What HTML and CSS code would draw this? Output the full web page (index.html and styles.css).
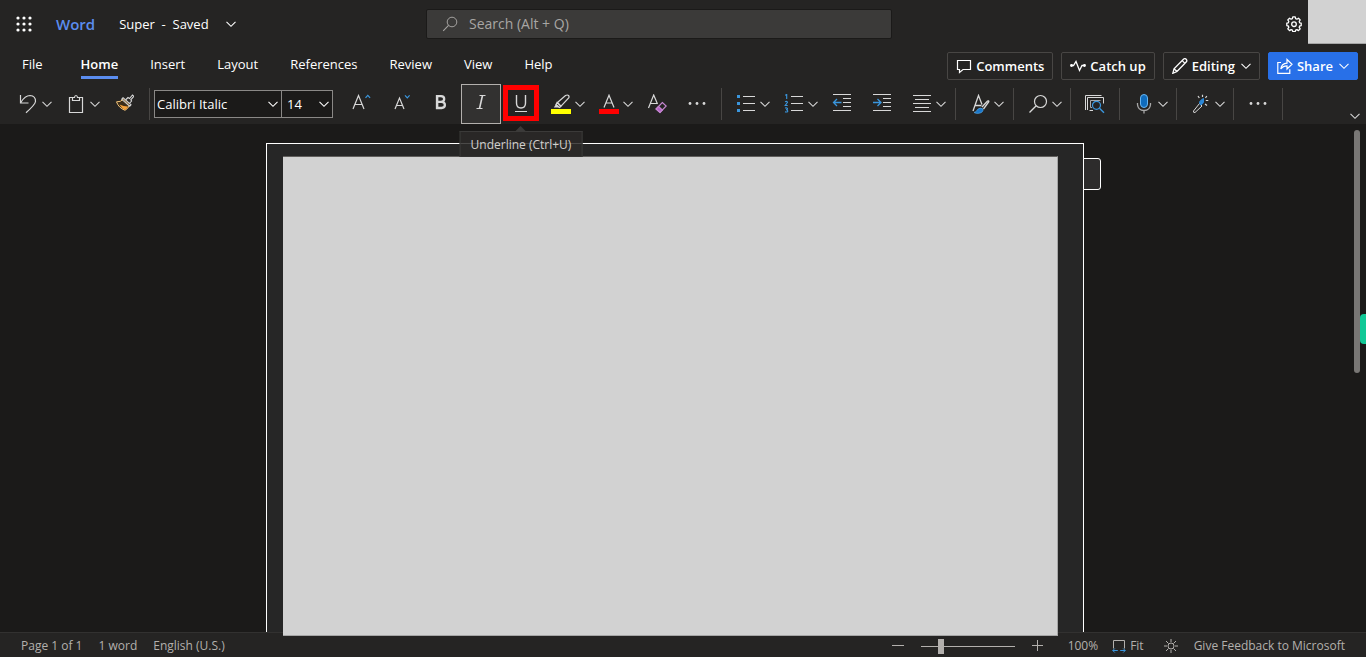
FILE: index.html
```html
<!DOCTYPE html>
<html lang="en">
<head>
<meta charset="utf-8">
<title>Super - Word</title>
<link rel="stylesheet" href="styles.css">
</head>
<body>
<svg class="defs" aria-hidden="true">
  <symbol id="chev" viewBox="0 0 10 10"><path d="M.5 2.800 5 7.300l4.500-4.500" fill="none" stroke="currentColor" stroke-width="1.100"/></symbol>
  <symbol id="lens" viewBox="0 0 20 20"><circle cx="12.500" cy="7.500" r="6" fill="none" stroke="currentColor" stroke-width="1.200"/><path d="M8.200 11.800 1.500 18.500" stroke="currentColor" stroke-width="1.300"/></symbol>
  <symbol id="dots" viewBox="0 0 20 20"><g fill="currentColor"><circle cx="3" cy="9.500" r="1.400"/><circle cx="10" cy="9.500" r="1.400"/><circle cx="17" cy="9.500" r="1.400"/></g></symbol>
</svg>

<header class="titlebar">
  <div class="title-left">
    <button class="plain launcher" aria-label="App launcher"><svg width="16" height="16" viewBox="0 0 16 16" fill="currentColor"><circle cx="2" cy="2" r="1.600"/><circle cx="8" cy="2" r="1.600"/><circle cx="14" cy="2" r="1.600"/><circle cx="2" cy="8" r="1.600"/><circle cx="8" cy="8" r="1.600"/><circle cx="14" cy="8" r="1.600"/><circle cx="2" cy="14" r="1.600"/><circle cx="8" cy="14" r="1.600"/><circle cx="14" cy="14" r="1.600"/></svg></button>
    <a class="brand" href="#">Word</a>
    <button class="plain docname"><span>Super&nbsp; -&nbsp; Saved</span><svg width="10" height="10"><use href="#chev"/></svg></button>
  </div>
  <label class="search"><svg width="16" height="16"><use href="#lens"/></svg><input type="text" placeholder="Search (Alt + Q)" aria-label="Search"></label>
  <div class="title-right">
    <button class="plain gear" aria-label="Settings"><svg width="16" height="16" viewBox="0 0 16 16" fill="none" stroke="currentColor" stroke-width="1.300" stroke-linejoin="round"><path d="M6.800.8h2.400l.4 1.900 1.300.5 1.600-1 1.700 1.700-1 1.600.5 1.300 1.500.4v2.400l-1.500.4-.5 1.300 1 1.600-1.700 1.700-1.600-1-1.300.5-.4 1.500H6.800l-.4-1.500-1.300-.5-1.600 1-1.700-1.700 1-1.600-.5-1.300-1.500-.4V7.200l1.500-.4.5-1.300-1-1.600 1.700-1.700 1.600 1 1.300-.5z"/><circle cx="8" cy="8.200" r="2.300"/></svg></button>
    <div class="account"></div>
  </div>
</header>

<nav class="tabs">
  <div class="tablist">
    <button class="tab">File</button>
    <button class="tab active">Home</button>
    <button class="tab">Insert</button>
    <button class="tab">Layout</button>
    <button class="tab">References</button>
    <button class="tab">Review</button>
    <button class="tab">View</button>
    <button class="tab">Help</button>
  </div>
  <div class="actions">
    <button class="action"><svg width="16" height="16" viewBox="0 0 16 16" fill="none" stroke="currentColor" stroke-width="1.200"><path d="M1.500 2.500h13v9H7l-3.500 3v-3h-2z"/></svg>Comments</button>
    <button class="action"><svg width="16" height="16" viewBox="0 0 16 16" fill="none" stroke="currentColor" stroke-width="1.300"><path d="M1 7.500h2.500l2.500-4 3.500 9 2.500-5h3"/><circle cx="1.500" cy="7.500" r=".8"/><circle cx="14.500" cy="7.500" r=".8"/></svg>Catch up</button>
    <button class="action"><svg width="16" height="16" viewBox="0 0 16 16" fill="none" stroke="currentColor" stroke-width="1.300"><path d="m.8 15.300 1.200-4.500L11.700 1.100q1.300-1 2.500.2t.2 2.500L5 13.500zM10.200 2.600l3 3M2 10.800 5 13.500"/></svg>Editing<svg width="10" height="10"><use href="#chev"/></svg></button>
    <button class="action share"><svg width="16" height="16" viewBox="0 0 16 16" fill="none" stroke="currentColor" stroke-width="1.200"><path d="M4 4.500H.8v10.800h12v-4M3.800 11Q4.500 5.500 10 5.200V1.500l5 4.800-5 4.700V7.800Q6 7.800 3.800 11z"/></svg>Share<svg width="10" height="10"><use href="#chev"/></svg></button>
  </div>
</nav>

<div class="toolbar" role="toolbar" aria-label="Home">
  <div class="group pad-end">
    <button class="tool split" aria-label="Undo"><svg class="icon" viewBox="0 0 20 20" fill="none" stroke="currentColor" stroke-width="1.200"><path d="M2.500 1v8h8M2.800 8.500Q7 1.500 12 1.500q5.800.5 5.500 6-.3 3-9.500 11.300"/></svg><svg class="chev"><use href="#chev"/></svg></button>
    <button class="tool split" aria-label="Paste"><svg class="icon" viewBox="0 0 20 20" fill="none" stroke="currentColor" stroke-width="1.200"><path d="M7 3.500H3.500v15h13v-15H13M6.500 6.500v-3h2q.2-2 1.500-2t1.500 2h2v3z"/></svg><svg class="chev"><use href="#chev"/></svg></button>
    <button class="tool" aria-label="Format painter"><svg class="icon" viewBox="0 0 20 20" fill="none"><path d="M9.500 5.200Q6.500 8.200 2.500 7.800q2 6 8.500 8.500 3.200-1.500 4.500-5.300z" fill="#3c2d18" stroke="#f3c47a"/><path d="M5.500 10.500q4 2 8.500 2-.8 2-3 3.500-3.500-1.500-5.500-5.500z" fill="#f4a13a"/><path d="m9 3.700 8 7-1.300 1.600-8-7zM12 5.500l2-2 1.500 1 3-3.500 1.300 1.300-3 3.500.8 1.200-1.800 2" stroke="#d8d8d8" stroke-width="1.100"/></svg></button>
  </div>
  <div class="group">
    <div class="combo font-name"><select aria-label="Font"><option>Calibri Italic</option></select><svg class="chev"><use href="#chev"/></svg></div>
    <div class="combo font-size"><select aria-label="Font size"><option>14</option></select><svg class="chev"><use href="#chev"/></svg></div>
  </div>
  <div class="group font-group">
    <button class="tool" aria-label="Grow font"><svg class="icon" viewBox="0 0 20 20" fill="none" stroke="currentColor" stroke-width="1.200"><path d="M2 15 7.500 1.500 13 15M4 10.500h7"/><path d="m14.500 3.800 2.300-2.500 2.300 2.500" stroke="#3a96dd"/></svg></button>
    <button class="tool" aria-label="Shrink font"><svg class="icon" viewBox="0 0 20 20" fill="none" stroke="currentColor" stroke-width="1.200"><path d="M4 15 8.500 4 13 15M5.800 11.500h5.500"/><path d="m14 1.300 2.300 2.500 2.300-2.500" stroke="#3a96dd"/></svg></button>
    <button class="tool" aria-label="Bold"><svg class="icon" viewBox="0 0 20 20" fill="none" stroke="currentColor" stroke-width="2.300"><path d="M6 2.200h4q3.200.2 3.200 2.800T10 7.900H6zM6 7.900h4.500q3.400.3 3.400 3T10.500 14H6zM6.200 1.100v14"/></svg></button>
    <button class="tool pressed" aria-label="Italic" aria-pressed="true"><svg class="icon" viewBox="0 0 20 20" fill="none" stroke="currentColor"><path d="M8.500 1.500h6M5.500 14.500h6"/><path d="m11.500 1.500-3 13" stroke-width="1.600"/></svg></button>
    <button class="tool underline" aria-label="Underline" aria-describedby="tip"><svg class="icon" viewBox="0 0 20 20" fill="none" stroke="currentColor" stroke-width="1.400"><path d="M5.500 1v8q0 5 4.500 5t4.500-5V1"/><path d="M4 17.500h12" stroke-width="1"/></svg><span class="tooltip" id="tip" role="tooltip">Underline (Ctrl+U)</span></button>
    <button class="tool split" aria-label="Highlight"><svg class="icon" viewBox="0 0 20 20" fill="none" stroke="currentColor" stroke-width="1.200"><path d="M0 15h20v5H0z" fill="#ff0" stroke="none"/><path d="m6.500 8.500 8-7q2-1 3 0t.2 2.500L10 12.200zM6 8.500l4 4-1.500 1-3.500-3z"/><path d="m5 10 3.500 3.500H2.800z" fill="currentColor" stroke="none"/></svg><svg class="chev"><use href="#chev"/></svg></button>
    <button class="tool split" aria-label="Font color"><svg class="icon" viewBox="0 0 20 20" fill="none" stroke="currentColor" stroke-width="1.200"><path d="M0 15h20v5H0z" fill="#f00" stroke="none"/><path d="M5 13.500 10 1.200l5 12.300M7 9h6"/></svg><svg class="chev"><use href="#chev"/></svg></button>
    <button class="tool" aria-label="Clear formatting"><svg class="icon" viewBox="0 0 20 20" fill="none" stroke="currentColor" stroke-width="1.200"><path d="M1.500 14 6.700 1l3.800 9M3.300 9.500h7"/><path d="m15.300 8.500 3.900 3.500-6.200 6.500-3.900-3.500z" stroke="#c586d0"/><path d="m11.500 12.500 3.900 3.500-2.400 2.500-3.900-3.500z" fill="#b35fc4" stroke="#c586d0"/></svg></button>
    <button class="tool" aria-label="More font options"><svg class="icon"><use href="#dots"/></svg></button>
  </div>
  <div class="group pad-end">
    <button class="tool split" aria-label="Bullets"><svg class="icon" viewBox="0 0 20 20"><path d="M1 1h3v3H1zM1 8h3v3H1zM1 15h3v3H1z" fill="#3a96dd"/><path d="M7 2.500h12M7 9.500h12M7 16.500h12" stroke="currentColor"/></svg><svg class="chev"><use href="#chev"/></svg></button>
    <button class="tool split" aria-label="Numbering"><svg class="icon" viewBox="0 0 20 20" fill="none"><path d="M1.200 1.200 2.700.5V5M1 7.800q2.500-1 2.500.5L1.200 11.500h2.500M1 14q2.500-.5 2.500.7 0 1-1.500 1 1.800 0 1.800 1.300 0 1.500-2.800.9" stroke="#3a96dd" stroke-width="1.100"/><path d="M7 2.500h12M7 9.500h12M7 16.500h12" stroke="currentColor"/></svg><svg class="chev"><use href="#chev"/></svg></button>
    <button class="tool" aria-label="Decrease indent"><svg class="icon" viewBox="0 0 20 20" fill="none" stroke="currentColor"><path d="M1 .5h18M11 4.500h8M11 8.500h8M11 12.500h8M1 16.500h18"/><path d="M9.500 8.500H1.500M5 5 1.500 8.500 5 12" stroke="#3a96dd" stroke-width="1.300"/></svg></button>
    <button class="tool" aria-label="Increase indent"><svg class="icon" viewBox="0 0 20 20" fill="none" stroke="currentColor"><path d="M1 .5h18M11 4.500h8M11 8.500h8M11 12.500h8M1 16.500h18"/><path d="M1 8.500h8M5.500 5 9 8.500 5.500 12" stroke="#3a96dd" stroke-width="1.300"/></svg></button>
    <button class="tool split" aria-label="Alignment"><svg class="icon" viewBox="0 0 20 20" stroke="currentColor"><path d="M1 1.500h18M3 5.500h14M1 9.500h18M3 13.500h14M1 17.500h18"/></svg><svg class="chev"><use href="#chev"/></svg></button>
  </div>
  <div class="group pad-end">
    <button class="tool split" aria-label="Styles"><svg class="icon" viewBox="0 0 20 20" fill="none" stroke="currentColor" stroke-width="1.300"><path d="M3 17 8.500 1.500 12 10.500M4.500 11.500h7M12 13l5.500-6q1.500-.6 1.300.7L13.500 15"/><path d="M4 18.500q2.500-.5 3.500-3 2.500-2.500 5.500-.5.500 3.500-4 4.300-3 .4-5-.8z" fill="#1a78cc" stroke="#5fb2f0" stroke-width=".6"/></svg><svg class="chev"><use href="#chev"/></svg></button>
  </div>
  <div class="group">
    <button class="tool split" aria-label="Find"><svg class="icon"><use href="#lens"/></svg><svg class="chev"><use href="#chev"/></svg></button>
  </div>
  <div class="group">
    <button class="tool" aria-label="Reuse files"><svg class="icon" viewBox="0 0 20 20" fill="none" stroke="currentColor"><path d="M.5 16V1.500h16M2.500 16V3.500h16v6M8 16.500H4.500"/><path d="M7 13.500H5.500v-7h10" stroke="#a8a8a8"/><circle cx="11.500" cy="11.300" r="4" fill="#252423" stroke="#3a96dd" stroke-width="1.200"/><path d="m14.500 14.200 4.500 4.500" stroke="#3a96dd" stroke-width="1.400"/></svg></button>
  </div>
  <div class="group">
    <button class="tool split" aria-label="Dictate"><svg class="icon" viewBox="0 0 20 20" fill="none"><rect x="6.500" y=".5" width="7" height="13" rx="3.500" fill="#0f6cbd" stroke="#69b5ef"/><path d="M3.500 9v1.500q.5 6 6.500 6t6.500-6V9M10 16.500v3" stroke="#a8a8a8" stroke-width="1.300"/></svg><svg class="chev"><use href="#chev"/></svg></button>
  </div>
  <div class="group">
    <button class="tool split" aria-label="Designer"><svg class="icon" viewBox="0 0 20 20" fill="none" stroke="currentColor"><path d="m8.500 9.500 2.500 2.500-7 6.500q-2 .3-1.500-1.500z"/><path d="M8.500 8q2-3 4-3.500v3.500q-.5 2-3 3z" fill="#2b88d8" stroke="#2b88d8"/><path d="M11.500.8V3M7 2l1.300 2M15.800 2l-1.300 2M14.800 6.500h2.500M14 10l2 1.500" stroke-width="1.200"/></svg><svg class="chev"><use href="#chev"/></svg></button>
  </div>
  <div class="group">
    <button class="tool" aria-label="More"><svg class="icon"><use href="#dots"/></svg></button>
  </div>
  <button class="plain collapse" aria-label="Collapse ribbon"><svg width="10" height="10"><use href="#chev"/></svg></button>
</div>

<main class="canvas">
  <div class="page">
    <div class="sheet"></div>
    <div class="page-flag"></div>
  </div>
  <div class="scroll-thumb"></div>
  <div class="side-widget"></div>
</main>

<footer class="status">
  <div class="status-left"><span>Page 1 of 1</span><span>1 word</span><span>English (U.S.)</span></div>
  <div class="status-right">
    <button class="plain" aria-label="Zoom out"><svg width="12" height="12" stroke="currentColor"><path d="M0 5.500h12"/></svg></button>
    <input class="zoom" type="range" min="0" max="100" value="20" aria-label="Zoom">
    <button class="plain plus" aria-label="Zoom in"><svg width="12" height="12" stroke="currentColor"><path d="M0 5.500h11M5.500 0v11"/></svg></button>
    <span class="percent">100%</span>
    <button class="plain fit"><svg width="14" height="14" viewBox="0 0 14 14" fill="none"><path d="M1.500 9.500v-8h11v8" stroke="currentColor"/><path d="M.8 11.500h5M8.200 11.500h5M2.800 9.500l-2 2 2 2M11.200 9.500l2 2-2 2" stroke="#3a96dd"/></svg>Fit</button>
    <button class="plain sun" aria-label="Switch background"><svg width="14" height="14" viewBox="0 0 14 14" fill="none" stroke="currentColor"><circle cx="7" cy="7" r="3"/><path d="M7 0v3M7 11v3M0 7h3M11 7h3M2 2l2.500 2.500M9.500 9.500 12 12M12 2 9.500 4.500M4.500 9.500 2 12"/></svg></button>
    <a href="#">Give Feedback to Microsoft</a>
  </div>
</footer>
</body>
</html>
```
FILE: styles.css
```css
*, *::before, *::after { box-sizing: border-box; }
body {
  margin: 0;
  height: 100vh;
  display: flex;
  flex-direction: column;
  overflow: hidden;
  background: #1b1a19;
  color: #fff;
  font: 13px/20px "Open Sans", "Noto Sans", sans-serif;
}
button, input, select { font: inherit; color: inherit; }
button { cursor: pointer; }
a { color: inherit; text-decoration: none; }
svg { display: block; flex: none; }
.defs { position: absolute; width: 0; height: 0; }
.plain {
  display: flex;
  align-items: center;
  padding: 0;
  border: 0;
  background: none;
}

.titlebar {
  display: grid;
  grid-template-columns: 410px minmax(0, 466px) 1fr;
  align-items: center;
  height: 48px;
  padding-left: 16px;
  background: #252423;
}
.title-left { display: flex; align-items: center; }
.brand {
  margin: 0 24px;
  color: #5b8def;
  font-size: 15px;
  font-weight: 600;
}
.docname { gap: 17px; }
.search {
  display: flex;
  align-items: center;
  gap: 11px;
  height: 30px;
  padding: 0 15px;
  border: 1px solid #1b1a19;
  border-radius: 2px;
  background: #3b3a39;
  color: #a8a6a4;
  font-size: 14px;
}
.search input {
  flex: 1;
  padding: 0;
  border: 0;
  outline: 0;
  background: none;
}
.search input::placeholder { color: #a8a6a4; opacity: 1; }
.title-right {
  display: flex;
  justify-content: flex-end;
  align-self: start;
  gap: 6px;
}
.gear { height: 48px; }
.account {
  width: 58px;
  height: 44px;
  border-bottom: 1px solid #a6a6a6;
  background: #d2d2d2;
}

.tabs {
  display: flex;
  justify-content: space-between;
  height: 36px;
  padding: 0 8px 0 22px;
  background: #252423;
}
.tablist { display: flex; gap: 32px; }
.tab {
  height: 31px;
  padding: 5px 0 2px;
  border: 0;
  border-bottom: 3px solid transparent;
  background: none;
}
.tab:first-child { margin-right: 6px; }
.tab.active { border-color: #5b8def; font-weight: 600; }
.actions { display: flex; gap: 8px; padding-top: 4px; }
.action {
  display: flex;
  align-items: center;
  gap: 4px;
  height: 28px;
  padding: 0 8px;
  border: 1px solid #484644;
  border-radius: 2px;
  background: none;
  font-weight: 600;
}
.action svg + svg { margin-left: 2px; }
.action.share { border-color: #2870e8; background: #2870e8; }

.toolbar {
  display: flex;
  height: 40px;
  padding-left: 8px;
  background: #252423;
  color: #d8d8d8;
}
.group {
  display: flex;
  align-items: center;
  position: relative;
  padding-right: 4px;
  margin-right: 5px;
}
.group::after {
  content: "";
  position: absolute;
  right: -1px;
  top: 4px;
  bottom: 4px;
  width: 1px;
  background: #484644;
}
.group.pad-end { padding-right: 5px; }
.group:nth-child(2) { padding: 0; margin-right: 8px; }
.group:nth-child(2)::after { display: none; }
.tool {
  display: flex;
  align-items: center;
  gap: 4px;
  width: 40px;
  height: 40px;
  padding: 0 9px;
  border: 1px solid transparent;
  background: none;
}
.tool.split { width: 48px; padding-right: 3px; }
.tool.pressed { border-color: #b3b0ad; background: #323130; }
.icon { width: 20px; height: 20px; }
.chev { width: 10px; height: 10px; }
.combo {
  display: flex;
  align-items: center;
  position: relative;
  height: 28px;
  border: 1px solid #8a8886;
  background: #1b1a19;
  color: #fff;
}
.combo select {
  width: 100%;
  height: 26px;
  padding: 0 16px 0 2px;
  border: 0;
  outline: 0;
  appearance: none;
  background: none;
}
.combo .chev { position: absolute; right: 3px; pointer-events: none; }
.font-name { width: 128px; }
.font-size { width: 52px; margin-left: -1px; }
.font-size select { padding-left: 5px; }

.underline { position: relative; }
.underline::before {
  content: "";
  position: absolute;
  left: 1px;
  top: 0;
  width: 36px;
  height: 36px;
  border: 5px solid #f00;
}
.tooltip {
  position: absolute;
  z-index: 4;
  top: 46px;
  left: 50%;
  transform: translateX(-50%);
  height: 26px;
  padding: 3px 10px;
  border: 1px solid #3b3a39;
  border-bottom: 0;
  background: rgba(43, 42, 41, 0.85);
  color: #d2d0ce;
  font-size: 12px;
  white-space: nowrap;
}
.tooltip::before {
  content: "";
  position: absolute;
  left: 50%;
  top: -6px;
  margin-left: -6px;
  border: 6px solid transparent;
  border-top: 0;
  border-bottom-color: #3b3a39;
}
.collapse {
  align-self: flex-end;
  margin: 0 6px 3px auto;
}

.canvas {
  flex: 1;
  position: relative;
  display: flex;
  justify-content: center;
  padding: 19px 16px 0 0;
}
.page {
  position: relative;
  width: 818px;
  border: 1px solid #fff;
  border-bottom: 0;
  background: #262626;
}
.sheet {
  position: absolute;
  z-index: 3;
  inset: 12px 25px -4px 16px;
  border: 1px solid #a6a6a6;
  border-left: 0;
  border-top-color: #605e5c;
  background: #d2d2d2;
}
.page-flag {
  position: absolute;
  left: 100%;
  top: 14px;
  width: 18px;
  height: 32px;
  border: 1px solid #fff;
  border-radius: 0 3px 3px 0;
  background: #2d2c2c;
}
.scroll-thumb {
  position: absolute;
  right: 6px;
  top: 6px;
  width: 6px;
  height: 243px;
  border-radius: 3px;
  background: #797775;
}
.side-widget {
  position: absolute;
  right: 0;
  top: 190px;
  width: 6px;
  height: 30px;
  border-radius: 4px 0 0 4px;
  background: #10c896;
}

.status {
  display: flex;
  justify-content: space-between;
  align-items: center;
  height: 25px;
  padding: 2px 21px 0;
  border-top: 1px solid #323130;
  background: #252423;
  color: #b3b0ad;
  font-size: 12px;
}
.status-left { display: flex; gap: 16px; }
.status-right { display: flex; align-items: center; }
.zoom {
  width: 94px;
  height: 16px;
  margin: 0 17px;
  appearance: none;
  background: linear-gradient(#b3b0ad, #b3b0ad) center / 100% 1px no-repeat;
}
.zoom::-webkit-slider-thumb {
  appearance: none;
  width: 6px;
  height: 15px;
  background: #b3b0ad;
}
.plus { margin-right: 24px; }
.percent { margin-right: 14px; }
.fit { gap: 4px; margin-right: 20px; }
.sun { margin-right: 16px; }
```
